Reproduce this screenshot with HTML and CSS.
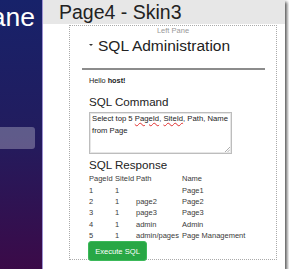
FILE: index.html
```html
<!DOCTYPE html>
<html lang="en">

<head>
  <meta charset="UTF-8" />
  <meta name="viewport" content="width=device-width, initial-scale=1.0" />
  <title>Page4 - Skin3</title>
  <link rel="stylesheet" href="styles.css">
</head>

<body>
  <div class="frame">
    <aside class="sidebar">
      <div class="logo"><span>Oqtane</span></div>
      <div class="nav-item"></div>
    </aside>

    <div class="main">
      <header class="topbar">Page4 - Skin3</header>

      <section class="pane">
        <div class="pane-label">Left Pane</div>
        <div class="module">
          <h2 class="module-title"><span class="caret"></span>SQL Administration</h2>
          <hr>
          <div class="module-body">
            <p class="hello">Hello <b>host!</b></p>

            <h3>SQL Command</h3>
            <div class="sql-box">
              Select top 5 <span class="typo">PageId</span>, <span class="typo">SiteId</span>, Path, Name from Page
              <svg class="grip" width="6" height="6" viewBox="0 0 6 6">
                <path d="M1 6 L6 1 M3.5 6 L6 3.5" stroke="#999" stroke-width="0.8" />
              </svg>
            </div>

            <h3>SQL Response</h3>
            <table class="result">
              <tr><th class="c1">PageId</th><th class="c2">SiteId</th><th class="c3">Path</th><th>Name</th></tr>
              <tr><td>1</td><td>1</td><td></td><td>Page1</td></tr>
              <tr><td>2</td><td>1</td><td>page2</td><td>Page2</td></tr>
              <tr><td>3</td><td>1</td><td>page3</td><td>Page3</td></tr>
              <tr><td>4</td><td>1</td><td>admin</td><td>Admin</td></tr>
              <tr><td>5</td><td>1</td><td>admin/pages</td><td>Page Management</td></tr>
            </table>

            <button class="run-btn">Execute SQL</button>
          </div>
        </div>
      </section>
    </div>
  </div>
</body>

</html>
```

FILE: styles.css
```css
* {
  box-sizing: border-box;
}

body {
  margin: 0;
  padding: 0;
  background-color: #ffffff;
  font-family: "Liberation Sans", Arial, sans-serif;
  color: #333;
}

.frame {
  width: 285px;
  height: 269px;
  display: flex;
  overflow: hidden;
  background-color: #ffffff;
  box-shadow: 2px 2px 3px rgba(0, 0, 0, 0.65);
}

/* left navigation */
.sidebar {
  width: 43px;
  flex-shrink: 0;
  overflow: hidden;
  background: linear-gradient(to bottom, #17226a 0%, #221c5e 50%, #3b0a48 100%);
  border-right: 1px solid #9d92d2;
}

/* logo is cut by the window edge, only the end shows */
.logo {
  display: flex;
  justify-content: flex-end;
  padding: 3px 7px 0 0;
  font-size: 26.5px;
  line-height: 28px;
  color: #ffffff;
  white-space: nowrap;
}

.logo span {
  flex-shrink: 0;
}

.nav-item {
  width: 41px;
  height: 22px;
  margin: 96px 0 0 -6px;
  background-color: rgba(255, 255, 255, 0.28);
  border-radius: 3px;
}

/* page area */
.main {
  flex: 1;
  display: flex;
  flex-direction: column;
}

.topbar {
  height: 24px;
  padding-left: 16px;
  background-color: #e7e7e7;
  font-size: 19.5px;
  line-height: 24px;
  color: #222;
}

.pane {
  width: 208px;
  height: 235px;
  margin: 1px 0 0 26px;
  border: 1px dotted #aaa;
}

.pane-label {
  height: 10px;
  font-size: 7.5px;
  line-height: 10px;
  text-align: center;
  color: #999;
}

.module {
  padding: 0 11px 0 12px;
}

.module-title {
  margin: 1px 0 0;
  padding-left: 7px;
  font-size: 15.5px;
  line-height: 18px;
  font-weight: normal;
  color: #222;
  display: flex;
  align-items: center;
}

.caret {
  width: 0;
  height: 0;
  margin: 0 5px 0 0;
  border-top: 2px solid #333;
  border-left: 2px solid transparent;
  border-right: 2px solid transparent;
  position: relative;
  top: -1px;
}

hr {
  margin: 13px 0 0;
  border: 0;
  border-top: 2px solid #8c8c8c;
}

.module-body {
  padding-left: 7px;
}

.hello {
  margin: 6px 0 0;
  font-size: 7.3px;
  line-height: 10px;
  color: #222;
}

.module-body h3 {
  margin: 9px 0 0;
  font-size: 11.6px;
  line-height: 14px;
  font-weight: normal;
  color: #222;
}

.sql-box {
  position: relative;
  width: 143px;
  height: 42px;
  margin-top: 3px;
  padding: 0 2px;
  border: 1px solid #bdbdbd;
  box-shadow: inset 0 0 0 1px #e6e6e6;
  font-size: 7.7px;
  line-height: 11.5px;
  color: #222;
}

.typo {
  text-decoration: underline wavy #e03030;
  text-decoration-thickness: 0.6px;
  text-underline-offset: 1px;
}

.grip {
  position: absolute;
  right: 1px;
  bottom: 1px;
}

.sql-box + h3 {
  margin-top: 4px;
}

.result {
  margin-top: 1px;
  border-collapse: collapse;
  font-size: 7.5px;
  color: #3a3a3a;
}

.result th,
.result td {
  height: 11.4px;
  padding: 0;
  text-align: left;
  font-weight: normal;
  white-space: nowrap;
  vertical-align: middle;
}

.result .c1 {
  width: 26px;
}

.result .c2 {
  width: 21px;
}

.result .c3 {
  width: 46px;
}

.run-btn {
  display: block;
  width: 59px;
  height: 20px;
  margin: 0 0 0 -1px;
  padding: 0;
  background-color: #28a745;
  border: 1px solid #3cb95a;
  border-radius: 3px;
  font-family: "Liberation Sans", Arial, sans-serif;
  font-size: 7.6px;
  color: #ffffff;
}
```
